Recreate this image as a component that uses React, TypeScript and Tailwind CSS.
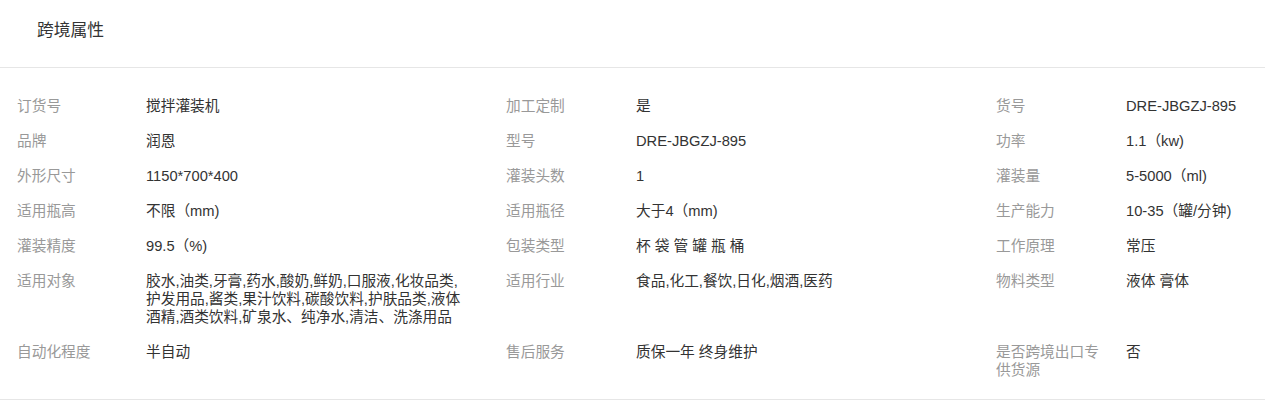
import React from "react";

type Cell = { label: string; value: string };

const rows: Cell[][] = [
  [
    { label: "订货号", value: "搅拌灌装机" },
    { label: "加工定制", value: "是" },
    { label: "货号", value: "DRE-JBGZJ-895" },
  ],
  [
    { label: "品牌", value: "润恩" },
    { label: "型号", value: "DRE-JBGZJ-895" },
    { label: "功率", value: "1.1（kw)" },
  ],
  [
    { label: "外形尺寸", value: "1150*700*400" },
    { label: "灌装头数", value: "1" },
    { label: "灌装量", value: "5-5000（ml)" },
  ],
  [
    { label: "适用瓶高", value: "不限（mm)" },
    { label: "适用瓶径", value: "大于4（mm)" },
    { label: "生产能力", value: "10-35（罐/分钟)" },
  ],
  [
    { label: "灌装精度", value: "99.5（%)" },
    { label: "包装类型", value: "杯 袋 管 罐 瓶 桶" },
    { label: "工作原理", value: "常压" },
  ],
  [
    {
      label: "适用对象",
      value:
        "胶水,油类,牙膏,药水,酸奶,鲜奶,口服液,化妆品类,护发用品,酱类,果汁饮料,碳酸饮料,护肤品类,液体酒精,酒类饮料,矿泉水、纯净水,清洁、洗涤用品",
    },
    { label: "适用行业", value: "食品,化工,餐饮,日化,烟酒,医药" },
    { label: "物料类型", value: "液体 膏体" },
  ],
  [
    { label: "自动化程度", value: "半自动" },
    { label: "售后服务", value: "质保一年 终身维护" },
    { label: "是否跨境出口专供货源", value: "否" },
  ],
];

export default function App() {
  return (
    <div
      className="w-[1265px] h-[404px] bg-white"
      style={{ fontFamily: '"Liberation Sans", Arial, "Noto Sans CJK SC", sans-serif' }}
    >
      <div className="h-[68px] flex items-center pl-[37px] pb-[6px] border-b border-[#e6e6e6] text-[16.8px] text-[#333]">
        跨境属性
      </div>
      <div className="pl-[17px] pt-[21px] pb-[11px] border-b border-[#e6e6e6]">
        <div className="grid grid-cols-[129px_360px_130px_360px_130px_1fr] text-[14.7px] leading-[18px]">
          {rows.map((row, i) =>
            row.map((c, j) => (
              <React.Fragment key={`${i}-${j}`}>
                <div className="pt-[8px] pb-[9px] pr-[20px] text-[#999]">{c.label}</div>
                <div
                  className={
                    j < 2
                      ? "pt-[8px] pb-[9px] pr-[40px] text-[#333]"
                      : "pt-[8px] pb-[9px] whitespace-nowrap text-[#333]"
                  }
                >
                  {c.value}
                </div>
              </React.Fragment>
            ))
          )}
        </div>
      </div>
    </div>
  );
}
